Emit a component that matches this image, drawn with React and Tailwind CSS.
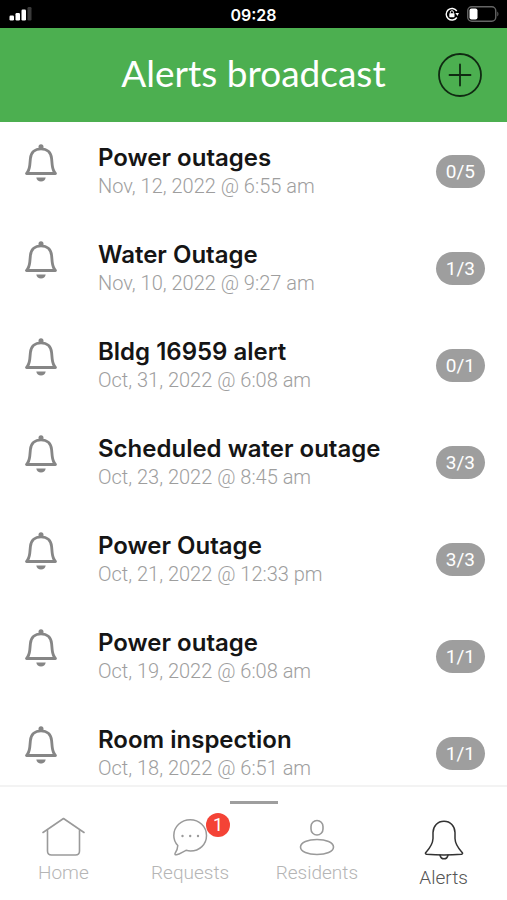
const alerts = [
  { id: 1, title: 'Power outages', date: 'Nov, 12, 2022 @ 6:55 am', count: '0/5' },
  { id: 2, title: 'Water Outage', date: 'Nov, 10, 2022 @ 9:27 am', count: '1/3' },
  { id: 3, title: 'Bldg 16959 alert', date: 'Oct, 31, 2022 @ 6:08 am', count: '0/1' },
  { id: 4, title: 'Scheduled water outage', date: 'Oct, 23, 2022 @ 8:45 am', count: '3/3' },
  { id: 5, title: 'Power Outage', date: 'Oct, 21, 2022 @ 12:33 pm', count: '3/3' },
  { id: 6, title: 'Power outage', date: 'Oct, 19, 2022 @ 6:08 am', count: '1/1' },
  { id: 7, title: 'Room inspection', date: 'Oct, 18, 2022 @ 6:51 am', count: '1/1' },
]

function BellIcon() {
  return (
    <svg width="34" height="40" viewBox="0 0 34 40" fill="none" aria-hidden="true">
      <path
        d="M2.5 30.500H31.500C29.500 28.500 28.600 25.500 28.200 22L27.600 15.500C27 9.500 23 5.800 17 5.800S7 9.500 6.400 15.500L5.800 22C5.400 25.500 4.500 28.500 2.500 30.500Z"
        stroke="#868686"
        strokeWidth="2.800"
        strokeLinejoin="round"
      />
      <circle cx="17" cy="3.800" r="2.500" fill="#868686" />
      <path d="M12.300 34.500H21.700C21.300 37 19.500 38.500 17 38.500S12.700 37 12.300 34.500Z" fill="#868686" />
    </svg>
  )
}

function HomeIcon() {
  return (
    <svg width="44" height="40" viewBox="0 0 44 40" fill="none" stroke="#9a9a9a" strokeWidth="1.6" strokeLinecap="round" strokeLinejoin="round" aria-hidden="true">
      <path d="M2 15.500L22.500 1.500L43 15.500" />
      <path d="M6.500 13.500V34C6.500 36.500 8 38 10.500 38H34.500C37 38 38.500 36.500 38.500 34V13.500" />
    </svg>
  )
}

function ChatIcon() {
  return (
    <svg width="36" height="40" viewBox="0 0 36 40" fill="none" aria-hidden="true">
      <path
        d="M5.800 28.500C3.200 25.800 1.800 22.500 1.800 18.500C1.800 9.500 9.200 2.800 18.200 2.800S34.500 9.500 34.500 18.500S27.500 34 18.500 34C16.800 34 15.500 33.700 14 33.300C10.500 35 7.500 37.200 4.500 37.800C3 38 2.600 37.200 3.200 36.200C4.600 34 5.700 31.500 5.800 28.500Z"
        stroke="#9a9a9a"
        strokeWidth="1.500"
        strokeLinejoin="round"
      />
      <g fill="#9a9a9a">
        <circle cx="10.500" cy="19" r="1.200" />
        <circle cx="18.200" cy="19" r="1.200" />
        <circle cx="26" cy="19" r="1.200" />
      </g>
    </svg>
  )
}

function PersonIcon() {
  return (
    <svg width="36" height="40" viewBox="0 0 36 40" fill="none" stroke="#9a9a9a" strokeWidth="1.600" aria-hidden="true">
      <rect x="12" y="3.500" width="12" height="14.500" rx="6" />
      <path d="M18 22.500C27 22.500 34.500 25.300 34.500 30S27 37.500 18 37.500S1.500 34.700 1.500 30S9 22.500 18 22.500Z" />
    </svg>
  )
}

function ActiveBellIcon() {
  return (
    <svg width="40" height="44" viewBox="0 0 40 44" fill="none" stroke="#333333" strokeWidth="1.500" strokeLinecap="round" strokeLinejoin="round" aria-hidden="true">
      <path d="M2.500 37.300C1.300 37.100 1.100 36.200 1.900 35.400C5.500 31.500 8.800 27.500 9 21.500V15.500C9.200 9 13.500 4.300 20 4.300S30.800 9 31 15.500V21.500C31.200 27.500 34.500 31.500 38.100 35.400C38.900 36.200 38.700 37.100 37.500 37.300Q20 38.700 2.500 37.300Z" />
      <path d="M16 38.200C16.500 40.200 18 41.800 20 41.800S23.500 40.200 24 38.200" />
    </svg>
  )
}

function StatusBar() {
  return (
    <div className="grid h-7 shrink-0 grid-cols-3 items-center bg-black px-2 text-white">
      <svg width="24" height="16" viewBox="0 0 24 16" fill="#ffffff" aria-label="Signal">
        <rect x="1.500" y="9.500" width="4.500" height="5" rx="1.200" />
        <rect x="7.500" y="7" width="4.500" height="7.500" rx="1.200" />
        <rect x="13.500" y="3.500" width="4.500" height="11" rx="1.200" />
        <rect x="19.500" y="1" width="4" height="13.500" rx="1.200" fill="#3a3a3a" />
      </svg>
      <span className="pt-0.5 text-center font-['Inter',sans-serif] text-base leading-6 font-semibold">09:28</span>
      <div className="flex items-center justify-end gap-2">
        <svg width="14" height="14" viewBox="0 0 14 14" fill="none" aria-label="Rotation lock">
          <path d="M11.800 4A5.800 5.800 0 1 0 11.800 10.500" stroke="#ffffff" strokeWidth="1.400" />
          <path d="M10.400 6H14L12.400 9Z" fill="#ffffff" />
          <rect x="4.300" y="6.200" width="5.200" height="4" rx="0.600" fill="#ffffff" />
          <path d="M5.400 6.400V5.200A1.500 1.500 0 0 1 8.400 5.200V6.400" stroke="#ffffff" />
        </svg>
        <svg width="32" height="16" viewBox="0 0 32 16" fill="none" aria-label="Battery">
          <rect x="0.750" y="0.750" width="28" height="14.500" rx="4" stroke="#656565" strokeWidth="1.400" />
          <rect x="2.500" y="2.500" width="8" height="11" rx="2" fill="#ffffff" />
          <path d="M30.300 5.500C31.800 6.500 31.800 9.500 30.300 10.500Z" fill="#656565" />
        </svg>
      </div>
    </div>
  )
}

function App() {
  return (
    <div className="flex h-screen flex-col bg-white font-['Roboto',sans-serif]">
      <StatusBar />

      <header className="grid h-[94px] shrink-0 grid-cols-[1fr_auto_1fr] items-center bg-[#4caf50] px-6">
        <h1 className="col-start-2 pb-1 font-['Lato',sans-serif] text-[37px] leading-10 text-white">Alerts broadcast</h1>
        <button type="button" aria-label="Add alert" className="justify-self-end">
          <svg width="46" height="46" viewBox="0 0 46 46" fill="none" stroke="#102a12" strokeWidth="1.800" strokeLinecap="round">
            <circle cx="23" cy="23" r="21" />
            <path d="M12.500 23H33.500M23 12.500V33.500" />
          </svg>
        </button>
      </header>

      {/* Alerts list */}
      <ul className="min-h-0 flex-1 overflow-hidden pt-px">
        {alerts.map((alert) => (
          <li key={alert.id} className="flex items-center py-5 pr-[22px] pl-6">
            <span className="mr-10 self-start">
              <BellIcon />
            </span>
            <div className="min-w-0 flex-1">
              <p className="font-['Inter',sans-serif] text-2xl leading-[30px] font-semibold text-[#151515]">{alert.title}</p>
              <p className="text-xl leading-[27px] font-light text-[#9e9e9e]">{alert.date}</p>
            </div>
            <span className="rounded-full bg-[#9e9e9e] px-[10px] py-1 text-[19px] leading-[25px] text-white">{alert.count}</span>
          </li>
        ))}
      </ul>

      {/* Bottom navigation */}
      <nav className="h-[115px] shrink-0 border-t-2 border-[#f3f3f3] bg-white pt-[14px]">
        <div className="mx-auto h-[3px] w-12 bg-[#9e9e9e]" />
        <div className="grid grid-cols-4 pt-[13px] text-[19px] leading-6 font-light text-[#b5b5b5]">
          <a href="#home" className="flex flex-col items-center">
            <span className="h-11"><HomeIcon /></span>
            Home
          </a>
          <a href="#requests" className="flex flex-col items-center">
            <span className="relative h-11">
              <ChatIcon />
              <span className="absolute -top-1 left-[34px] size-6 rounded-full bg-[#f44336] text-center text-lg leading-6 font-normal text-white">1</span>
            </span>
            Requests
          </a>
          <a href="#residents" className="flex flex-col items-center">
            <span className="h-11"><PersonIcon /></span>
            Residents
          </a>
          <a href="#alerts" aria-current="page" className="flex flex-col items-center text-[#555555]">
            <span className="h-[49px]"><ActiveBellIcon /></span>
            Alerts
          </a>
        </div>
      </nav>
    </div>
  )
}

export default App
